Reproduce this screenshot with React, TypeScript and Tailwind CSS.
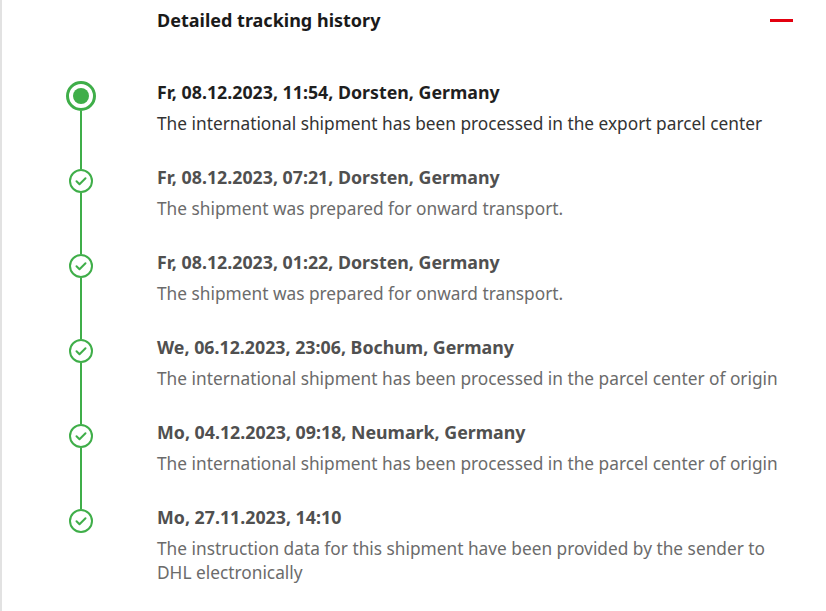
import React from "react";

interface TrackingEvent {
  title: string;
  text: string;
}

const events: TrackingEvent[] = [
  {
    title: "Fr, 08.12.2023, 11:54, Dorsten, Germany",
    text: "The international shipment has been processed in the export parcel center",
  },
  {
    title: "Fr, 08.12.2023, 07:21, Dorsten, Germany",
    text: "The shipment was prepared for onward transport.",
  },
  {
    title: "Fr, 08.12.2023, 01:22, Dorsten, Germany",
    text: "The shipment was prepared for onward transport.",
  },
  {
    title: "We, 06.12.2023, 23:06, Bochum, Germany",
    text: "The international shipment has been processed in the parcel center of origin",
  },
  {
    title: "Mo, 04.12.2023, 09:18, Neumark, Germany",
    text: "The international shipment has been processed in the parcel center of origin",
  },
  {
    title: "Mo, 27.11.2023, 14:10",
    text: "The instruction data for this shipment have been provided by the sender to DHL electronically",
  },
];

function CheckCircle() {
  return (
    <svg width="24" height="24" viewBox="0 0 24 24" className="shrink-0">
      <circle cx="12" cy="12" r="11" fill="white" stroke="#3fae49" strokeWidth="2" />
      <path d="M7.5 12.3l3 3 6-6" fill="none" stroke="#3fae49" strokeWidth="2" strokeLinecap="round" strokeLinejoin="round" />
    </svg>
  );
}

function CurrentCircle() {
  return (
    <svg width="30" height="30" viewBox="0 0 30 30" className="shrink-0">
      <circle cx="15" cy="15" r="13.5" fill="white" stroke="#3fae49" strokeWidth="3" />
      <circle cx="15" cy="15" r="8" fill="#3fae49" />
    </svg>
  );
}

export default function App() {
  return (
    <div
      className="min-h-screen w-[826px] h-[611px] overflow-hidden bg-white border-l-2 border-[#e2e2e2]"
      style={{ fontFamily: '"Noto Sans", "Open Sans", sans-serif' }}
    >
      {/* Header */}
      <div className="flex items-center justify-between pl-[155px] pr-[33px] pt-[8px] h-[32px]">
        <h2 className="text-[18px] font-bold text-[#1a1a1a] leading-[24px]">Detailed tracking history</h2>
        <span className="block w-[23px] h-[3px] bg-[#e3000f]" />
      </div>

      {/* Timeline */}
      <div className="mt-[48px] pl-[64px]">
        {events.map((ev, i) => {
          const first = i === 0;
          const last = i === events.length - 1;
          return (
            <div key={i} className="flex">
              <div className="w-[30px] flex flex-col items-center">
                {first ? (
                  <>
                    <div className="h-[1px]" />
                    <CurrentCircle />
                  </>
                ) : (
                  <>
                    <div className="h-[4px] w-[2px] bg-[#3fae49]" />
                    <CheckCircle />
                  </>
                )}
                {!last && <div className="flex-1 w-[2px] bg-[#3fae49]" />}
              </div>
              <div className={`ml-[61px] ${last ? "pb-[20px]" : "pb-[29px]"}`}>
                <div
                  className={`text-[17.8px] font-bold leading-[24px] ${first ? "text-[#1f1f1f]" : "text-[#505050]"}`}
                >
                  {ev.title}
                </div>
                <div
                  className={`mt-[8px] text-[17.3px] leading-[24px] max-w-[625px] ${first ? "text-[#333333]" : "text-[#6b6b6b]"}`}
                >
                  {ev.text}
                </div>
              </div>
            </div>
          );
        })}
      </div>
    </div>
  );
}
